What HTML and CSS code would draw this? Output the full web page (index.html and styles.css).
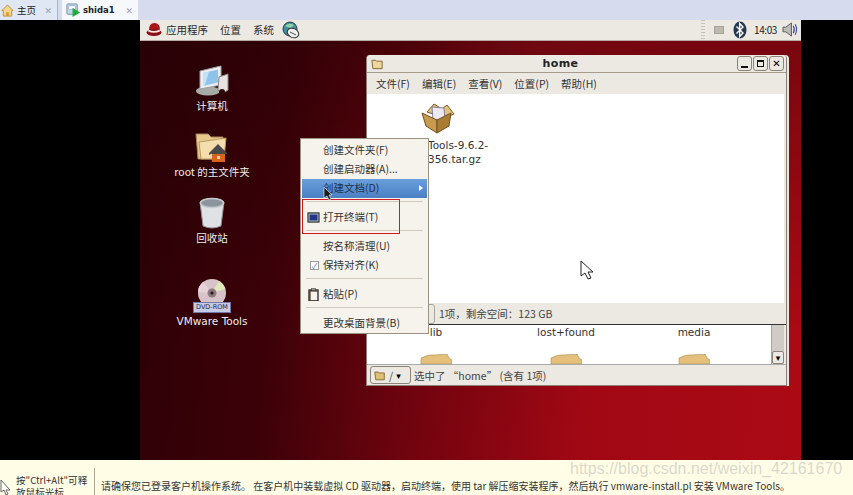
FILE: index.html
```html
<!DOCTYPE html>
<html lang="en">
<head>
    <meta charset="UTF-8">
    <title>shida1</title>
    <link rel="stylesheet" href="styles.css">
</head>
<body>
    <div class="tabbar">
        <div class="tab tab-home">
            <svg class="tab-icon" viewBox="0 0 14 14"><path d="M1 7 7 1l6 6h-1.500v6h-9V7z" fill="#f6d68a" stroke="#c68a2e"/><rect x="5.500" y="9" width="3" height="4" fill="#d89a3a"/></svg>
            <span>主页</span>
            <span class="tab-x">✕</span>
        </div>
        <div class="tab tab-vm">
            <svg class="tab-icon" viewBox="0 0 16 16"><rect x="1" y="1" width="11" height="11" rx="1" fill="#c8d8ea" stroke="#6d8fb0"/><rect x="3" y="3" width="7" height="4" fill="#fff" stroke="#7f9cba" stroke-width=".6"/><path d="M7 5v10l8-5z" fill="#1fae3a"/></svg>
            <span class="tab-name">shida1</span>
            <span class="tab-x">✕</span>
        </div>
    </div>

    <div class="stage">
        <div class="guest">
            <div class="panel">
                <div class="panel-left">
                    <svg class="hat" viewBox="0 0 16 15"><path d="M3 8q0-7 5.500-7T14 8z" fill="#a8161c"/><ellipse cx="8" cy="10.500" rx="7.500" ry="3.500" fill="#8e1016"/><path d="M2.500 7.500q5.500 3 11 0l.5 2q-6 2.500-12 0z" fill="#f4e9e4"/></svg>
                    <span class="panel-item">应用程序</span>
                    <span class="panel-item">位置</span>
                    <span class="panel-item">系统</span>
                    <svg class="globe" viewBox="0 0 18 18"><circle cx="8" cy="8" r="7" fill="#3f8f9c" stroke="#2c3d4a"/><path d="M3 5q4-4 9-1l-3 3-4-1z" fill="#8fd0a8"/><ellipse cx="11" cy="12" rx="6" ry="4.500" fill="#eef0ee" stroke="#333" transform="rotate(25 11 12)"/><path d="M8 11l6 3" stroke="#555"/></svg>
                </div>
                <div class="panel-right">
                    <span class="grip-bar"></span>
                    <span class="tray-box"></span>
                    <svg class="bluetooth" viewBox="0 0 14 18"><ellipse cx="7" cy="9" rx="6.500" ry="8.500" fill="#24384f"/><path d="M3.500 5.500 10 12l-3.300 3.500v-13L10 6l-6.500 6.500" fill="none" stroke="#fff" stroke-width="1.400"/></svg>
                    <span class="clock">14:03</span>
                    <svg class="speaker" viewBox="0 0 18 16"><path d="M1 5.500h3L10 1v14L4 10.500H1z" fill="#bdbdb8" stroke="#555"/><path d="M12 4q2 4 0 8M14 2.500q3 5.500 0 11" fill="none" stroke="#3f4fa0" stroke-width="1.200"/></svg>
                </div>
            </div>

            <div class="desktop">
                <div class="desk-icon icon-computer">
                    <svg class="desk-svg" viewBox="0 0 34 32"><ellipse cx="13" cy="26" rx="12" ry="4.500" fill="#a8aca6"/><path d="M5 6 26 1v19L5 24z" fill="#eceef0" stroke="#9aa0a6"/><path d="M8 8l15-3.500v13L8 21z" fill="#8fc4ea"/><path d="M8 8l6-1.500L10 20l-2 1z" fill="#c4e2f6"/><path d="M24 12l9-3v16l-6 4-4-4z" fill="#e8e2e2" stroke="#8b8585"/><circle cx="27" cy="27" r="3" fill="#2a0a0a"/></svg>
                    <span>计算机</span>
                </div>
                <div class="desk-icon icon-home">
                    <svg class="desk-svg" viewBox="0 0 34 32"><path d="M1 3h12l3 3h12v22H3z" fill="#e7c98e" stroke="#a88650"/><path d="M4 11 31 7l-2 21H6z" fill="#f4deae" stroke="#b89a60"/><path d="M14 22l9-9 9 9v1.500l-2-1V31H17v-8.500l-3 1.500z" fill="#4a4a4a"/><path d="M17 23h13v8H17z" fill="#d9641e"/><rect x="22" y="25" width="3" height="3" fill="#f3d9a0"/></svg>
                    <span>root 的主文件夹</span>
                </div>
                <div class="desk-icon icon-trash">
                    <svg class="desk-svg" viewBox="0 0 34 32"><path d="M5 5q12-6 24 0l-3 24q-9 4-18 0z" fill="#dfe1e4" stroke="#8d9196"/><ellipse cx="17" cy="6" rx="11.500" ry="4.500" fill="#8c959c" stroke="#c5cbd0" stroke-width="1.500"/></svg>
                    <span>回收站</span>
                </div>
                <div class="desk-icon icon-dvd">
                    <svg class="desk-svg" viewBox="0 0 34 32"><circle cx="17" cy="15" r="14" fill="#d8c4c8"/><path d="M17 15 24 3q5 3 6 8z" fill="#dfe8b8"/><path d="M17 15 8 4q-5 4-5 10z" fill="#e8d2da"/><circle cx="17" cy="15" r="4.500" fill="#8a7a80"/><circle cx="17" cy="15" r="1.500" fill="#2a0a10"/></svg>
                    <span class="dvd-tag">DVD-ROM</span>
                    <span>VMware Tools</span>
                </div>

                <div class="window">
                    <div class="win-title">
                        <svg class="win-folder" viewBox="0 0 14 12"><path d="M1 2h4l1 1h6v8H2z" fill="#efd79c" stroke="#7b6434"/></svg>
                        <span class="win-name">home</span>
                        <div class="win-btns">
                            <span class="win-btn"><i class="glyph-min"></i></span>
                            <span class="win-btn"><i class="glyph-max"></i></span>
                            <span class="win-btn glyph-close">✕</span>
                        </div>
                    </div>
                    <div class="win-menu">
                        <span>文件(F)</span>
                        <span>编辑(E)</span>
                        <span>查看(V)</span>
                        <span>位置(P)</span>
                        <span>帮助(H)</span>
                    </div>
                    <div class="win-files">
                        <svg class="package" viewBox="0 0 34 32"><path d="M6 10 13 2l8 5 5-4 7 9-9 4z" fill="#e3c27c" stroke="#7b5c22"/><path d="M11 5l12 1 1 12H12z" fill="#eceaf0" stroke="#88809a"/><path d="M1 11l15 7v13L5 24z" fill="#c79a4e" stroke="#6f5220"/><path d="M16 18l14-7-2 13-12 7z" fill="#a97c36" stroke="#6f5220"/></svg>
                        <div class="file-name">Tools-9.6.2-<br>356.tar.gz</div>
                    </div>
                    <div class="win-status">
                        <span class="status-btn"></span>
                        <span>1项，剩余空间：123 GB</span>
                    </div>
                    <div class="back-files">
                        <div class="back-col col-lib">
                            <span>lib</span>
                            <svg class="back-folder" viewBox="0 0 32 10"><path d="M1 10V4q8-4 14-3l12-1 2 4 3 2v4z" fill="#e4c07c" stroke="#a8894e" stroke-width=".6"/></svg>
                        </div>
                        <div class="back-col col-lost">
                            <span>lost+found</span>
                            <svg class="back-folder" viewBox="0 0 32 10"><path d="M1 10V4q8-4 14-3l12-1 2 4 3 2v4z" fill="#e4c07c" stroke="#a8894e" stroke-width=".6"/></svg>
                        </div>
                        <div class="back-col col-media">
                            <span>media</span>
                            <svg class="back-folder" viewBox="0 0 32 10"><path d="M1 10V4q8-4 14-3l12-1 2 4 3 2v4z" fill="#e4c07c" stroke="#a8894e" stroke-width=".6"/></svg>
                        </div>
                        <div class="scroll-bar"><span class="scroll-down">▾</span></div>
                    </div>
                    <div class="back-status">
                        <span class="path-btn">
                            <svg class="path-folder" viewBox="0 0 14 12"><path d="M1 2h4l1 1h6v8H2z" fill="#dcc070" stroke="#7b6434"/></svg>
                            <span>/</span>
                            <span class="path-arrow">▾</span>
                        </span>
                        <span>选中了 “home” (含有 1项)</span>
                    </div>
                </div>

                <svg class="cursor-big" viewBox="0 0 14 20"><path d="M1 1v15l4-3 3 6 3-1-3-6h5z" fill="#fff" stroke="#222"/></svg>

                <div class="menu">
                    <div class="menu-item">创建文件夹(F)</div>
                    <div class="menu-item">创建启动器(A)...</div>
                    <div class="menu-item selected">创建文档(D)<span class="submenu-arrow"></span></div>
                    <div class="menu-sep"></div>
                    <div class="menu-item">
                        <svg class="menu-icon" viewBox="0 0 14 14"><rect x="1" y="2" width="12" height="10" fill="#8aa0a8" stroke="#222"/><rect x="3" y="4" width="8" height="6" fill="#25358a"/></svg>
                        <span>打开终端(T)</span>
                    </div>
                    <div class="menu-sep"></div>
                    <div class="menu-item">按名称清理(U)</div>
                    <div class="menu-item">
                        <span class="check">✓</span>
                        <span>保持对齐(K)</span>
                    </div>
                    <div class="menu-sep"></div>
                    <div class="menu-item">
                        <svg class="menu-icon" viewBox="0 0 14 14"><rect x="2" y="2" width="10" height="12" fill="#6a5a40" stroke="#222"/><rect x="4" y="4" width="7" height="9" fill="#f4f2ec"/><rect x="5" y="0" width="4" height="3" fill="#999" stroke="#222" stroke-width=".5"/></svg>
                        <span>粘贴(P)</span>
                    </div>
                    <div class="menu-sep"></div>
                    <div class="menu-item">更改桌面背景(B)</div>
                </div>

                <div class="red-box"></div>
                <svg class="cursor-small" viewBox="0 0 10 15"><path d="M1 1v11l3-2 2 4 2-1-2-4h3z" fill="#1c1c1c" stroke="#d8e4f0" stroke-width=".7"/></svg>
            </div>
        </div>
    </div>

    <div class="hintbar">
        <svg class="hint-cursor" viewBox="0 0 12 16"><path d="M1 1v12l3-2 2 5 2-1-2-4h4z" fill="#fff" stroke="#666"/></svg>
        <div class="hint-keys">按"Ctrl+Alt"可释<br>放鼠标光标</div>
        <div class="hint-text">请确保您已登录客户机操作系统。 在客户机中装载虚拟 CD 驱动器，启动终端，使用 tar 解压缩安装程序，然后执行 vmware-install.pl 安装 VMware Tools。</div>
        <div class="watermark">https://blog.csdn.net/weixin_42161670</div>
    </div>
</body>
</html>
```

FILE: styles.css
```css
* {
    box-sizing: border-box;
}
html, body {
    margin: 0;
    height: 495px;
    overflow: hidden;
}
body {
    width: 853px;
    display: flex;
    flex-direction: column;
    font-family: "Noto Sans CJK SC", "DejaVu Sans", sans-serif;
    font-size: 10.5px;
    color: #222;
    background: #000;
}

/* vmware tabs */
.tabbar {
    height: 20px;
    flex: none;
    display: flex;
    background: #d6dcee;
}
.tab {
    display: flex;
    align-items: center;
    height: 20px;
    font-size: 9.5px;
}
.tab-home {
    width: 58px;
    padding-left: 1px;
    background: #dfe6f4;
    border-right: 1px solid #a9b4cc;
}
.tab-vm {
    width: 76px;
    margin-left: 4px;
    padding-left: 4px;
    background: #f6f8fc;
}
.tab-icon {
    width: 13px;
    height: 13px;
    margin-right: 3px;
    flex: none;
}
.tab-vm .tab-icon {
    width: 15px;
    height: 15px;
    margin-right: 2px;
}
.tab-name {
    font-family: "DejaVu Sans", sans-serif;
    font-weight: bold;
    font-size: 8.5px;
}
.tab-x {
    margin-left: auto;
    margin-right: 5px;
    color: #9aa2b2;
    font-size: 9px;
    font-weight: bold;
}

/* guest screen */
.stage {
    height: 440px;
    flex: none;
    padding-left: 140px;
    background: #000;
}
.guest {
    width: 661px;
    height: 440px;
    display: flex;
    flex-direction: column;
}
.panel {
    height: 21px;
    flex: none;
    display: flex;
    justify-content: space-between;
    align-items: center;
    padding: 0 2px 1px 6px;
    background: #ece9e3;
    border-bottom: 1px solid #b9a9a4;
}
.panel-left, .panel-right {
    display: flex;
    align-items: center;
}
.hat {
    width: 16px;
    height: 15px;
    margin-right: 4px;
}
.panel-item {
    margin-right: 12px;
    color: #2a2a2a;
}
.globe {
    width: 18px;
    height: 18px;
    margin-left: -4px;
}
.grip-bar {
    width: 4px;
    height: 19px;
    margin-right: 9px;
    background: repeating-linear-gradient(#c9c3b8 0 1px, transparent 1px 3px);
}
.tray-box {
    width: 10px;
    height: 8px;
    margin-right: 9px;
    background: #bdb9b0;
    border: 1px solid #a8a49c;
}
.bluetooth {
    width: 14px;
    height: 18px;
    margin-right: 7px;
}
.clock {
    width: 24px;
    font-size: 10px;
    letter-spacing: -.4px;
    margin-right: 4px;
}
.speaker {
    width: 17px;
    height: 15px;
}
.desktop {
    position: relative;
    flex: 1;
    overflow: hidden;
    background:
        linear-gradient(180deg, rgba(30, 0, 4, .35), rgba(30, 0, 4, 0) 70%),
        radial-gradient(ellipse 120px 30px at 400px 6px, rgba(170, 20, 30, .5), transparent),
        linear-gradient(95deg, #2c0106 0%, #3c0108 22%, #73040f 45%, #a00814 68%, #ab0a14 100%);
}

/* desktop icons */
.desk-icon {
    position: absolute;
    width: 110px;
    display: flex;
    flex-direction: column;
    align-items: center;
    color: #f2eeee;
    font-size: 10.5px;
    line-height: 14px;
    text-shadow: 0 1px 1px #200;
}
.desk-svg {
    width: 34px;
    height: 32px;
    margin-bottom: 2px;
}
.icon-computer {
    left: 17px;
    top: 24px;
}
.icon-home {
    left: 17px;
    top: 90px;
}
.icon-trash {
    left: 17px;
    top: 156px;
}
.icon-dvd {
    left: 17px;
    top: 237px;
}
.icon-dvd span:last-child {
    font-family: "DejaVu Sans", sans-serif;
    margin-top: 1px;
    font-size: 10.5px;
}
.dvd-tag {
    margin-top: -10px;
    padding: 0 2px;
    font-family: "DejaVu Sans", sans-serif;
    font-size: 6.5px;
    line-height: 9px;
    color: #26264a;
    background: #c7cbe6;
    border: 1px solid #7478a8;
    text-shadow: none;
}

/* nautilus window */
.window {
    position: absolute;
    left: 226px;
    top: 14px;
    width: 421px;
    height: 331px;
    display: flex;
    flex-direction: column;
    background: #ece9e3;
    border-radius: 4px 4px 0 0;
    border: 1px solid #8b7f78;
    border-top: none;
    box-shadow: 2px 0 0 #e9e5df;
    font-family: "DejaVu Sans", "Noto Sans CJK SC", sans-serif;
}
.win-title {
    position: relative;
    height: 18px;
    flex: none;
    display: flex;
    align-items: center;
    justify-content: center;
    padding-right: 32px;
    background: #ece9e3;
    border-radius: 4px 4px 0 0;
    border-bottom: 1px solid #a59c8c;
}
.win-folder {
    position: absolute;
    left: 4px;
    top: 3px;
    width: 13px;
    height: 12px;
}
.win-name {
    font-weight: bold;
    font-size: 11px;
    letter-spacing: .4px;
}
.win-btns {
    position: absolute;
    right: 2px;
    top: 1px;
    display: flex;
    gap: 1px;
}
.win-btn {
    width: 15px;
    height: 15px;
    display: flex;
    align-items: center;
    justify-content: center;
    background: #ece9e3;
    border: 1px solid #8b8478;
    border-radius: 3px;
}
.glyph-min {
    width: 7px;
    height: 2px;
    margin-top: 6px;
    background: #111;
}
.glyph-max {
    width: 7px;
    height: 7px;
    border: 1px solid #111;
    border-top-width: 2px;
}
.glyph-close {
    font-size: 10px;
    font-weight: bold;
    color: #000;
}
.win-menu {
    height: 21px;
    flex: none;
    display: flex;
    align-items: center;
    gap: 12px;
    padding-left: 9px;
    font-family: "Noto Sans CJK SC", sans-serif;
    font-size: 10.5px;
    color: #333;
}
.win-files {
    height: 209px;
    flex: none;
    margin-right: 2px;
    padding: 8px 0 0 54px;
    background: #fff;
}
.package {
    display: block;
    width: 34px;
    height: 32px;
}
.file-name {
    margin: 4px 0 0 7px;
    font-size: 10.5px;
    line-height: 14px;
    color: #333;
}
.win-status {
    height: 22px;
    flex: none;
    display: flex;
    align-items: center;
    padding-left: 68px;
    gap: 4px;
    font-family: "Noto Sans CJK SC", "DejaVu Sans", sans-serif;
    color: #444;
    border-bottom: 1px solid #333;
}
.status-btn {
    width: 28px;
    height: 20px;
    margin-left: -28px;
    flex: none;
    border: 1px solid #aaa49a;
    border-radius: 3px;
}
.back-files {
    position: relative;
    height: 39px;
    flex: none;
    margin-right: 2px;
    overflow: hidden;
    background: #fff;
    font-size: 10.5px;
    color: #333;
}
.back-col {
    position: absolute;
    top: 0;
    width: 60px;
    display: flex;
    flex-direction: column;
    align-items: center;
}
.back-col span {
    line-height: 14px;
}
.col-lib {
    left: 39px;
}
.col-lost {
    left: 169px;
}
.col-media {
    left: 297px;
}
.back-folder {
    width: 32px;
    height: 10px;
    margin-top: 15px;
}
.scroll-bar {
    position: absolute;
    right: 0;
    top: 0;
    bottom: 0;
    width: 13px;
    background: #cfccc6;
    border-left: 1px solid #a9a59c;
}
.scroll-down {
    position: absolute;
    left: 0;
    right: 0;
    bottom: 0;
    height: 13px;
    line-height: 12px;
    text-align: center;
    font-size: 9px;
    color: #000;
    background: #ece9e3;
    border: 1px solid #8b8478;
    border-radius: 2px;
}
.back-status {
    flex: 1;
    display: flex;
    align-items: center;
    padding-left: 3px;
    gap: 3px;
    border-top: 1px solid #aaa;
    font-family: "Noto Sans CJK SC", "DejaVu Sans", sans-serif;
    color: #444;
}
.path-btn {
    width: 41px;
    height: 18px;
    display: flex;
    align-items: center;
    gap: 3px;
    padding-left: 3px;
    border: 1px solid #8b8478;
    border-radius: 3px;
}
.path-folder {
    width: 12px;
    height: 11px;
}
.path-arrow {
    font-size: 9px;
    color: #000;
}

/* context menu */
.menu {
    position: absolute;
    left: 160px;
    top: 97px;
    width: 129px;
    height: 196px;
    padding: 2px 1px;
    background: #f6f3ed;
    border: 1px solid #9c9284;
    color: #333;
}
.menu-item {
    position: relative;
    height: 19px;
    padding: 0 0 2px 21px;
    display: flex;
    align-items: center;
    font-size: 10.5px;
    line-height: 17px;
}
.menu-item.selected {
    background: linear-gradient(#6a9fdc, #4a80c4);
    color: #20324c;
}
.submenu-arrow {
    position: absolute;
    right: 4px;
    top: 6px;
    border: 3px solid transparent;
    border-left: 4px solid #fff;
    border-right: 0;
}
.menu-sep {
    height: 1px;
    margin: 3px 4px 6px;
    background: #cfc9bf;
}
.menu-icon {
    position: absolute;
    left: 5px;
    top: 3px;
    width: 13px;
    height: 13px;
}
.check {
    position: absolute;
    left: 8px;
    top: 5px;
    width: 9px;
    height: 9px;
    background: #fff;
    border: 1px solid #9b9b9b;
    color: #4a7cc0;
    font-size: 8px;
    line-height: 8px;
    text-align: center;
}
.red-box {
    position: absolute;
    left: 162px;
    top: 158px;
    width: 98px;
    height: 35px;
    border: 1px solid #d21c24;
}
.cursor-small {
    position: absolute;
    left: 183px;
    top: 145px;
    width: 10px;
    height: 15px;
}
.cursor-big {
    position: absolute;
    left: 440px;
    top: 219px;
    width: 14px;
    height: 20px;
}

/* bottom hint */
.hintbar {
    position: relative;
    flex: 1;
    display: flex;
    background: #fffde6;
    overflow: hidden;
    color: #333;
}
.hint-cursor {
    width: 12px;
    height: 16px;
    margin-top: 19px;
    flex: none;
}
.hint-keys {
    width: 78px;
    margin: 14px 0 0 4px;
    font-size: 9.6px;
    line-height: 12px;
    white-space: nowrap;
}
.hint-text {
    height: 27px;
    margin-top: 8px;
    padding: 11px 0 0 6px;
    border-left: 1px solid #a8a690;
    font-size: 10px;
    line-height: 14px;
    white-space: nowrap;
}
.watermark {
    position: absolute;
    left: 570px;
    top: -3px;
    font-family: "Liberation Sans", sans-serif;
    font-size: 16px;
    line-height: 24px;
    color: rgba(170, 170, 170, .45);
    white-space: nowrap;
}
```
